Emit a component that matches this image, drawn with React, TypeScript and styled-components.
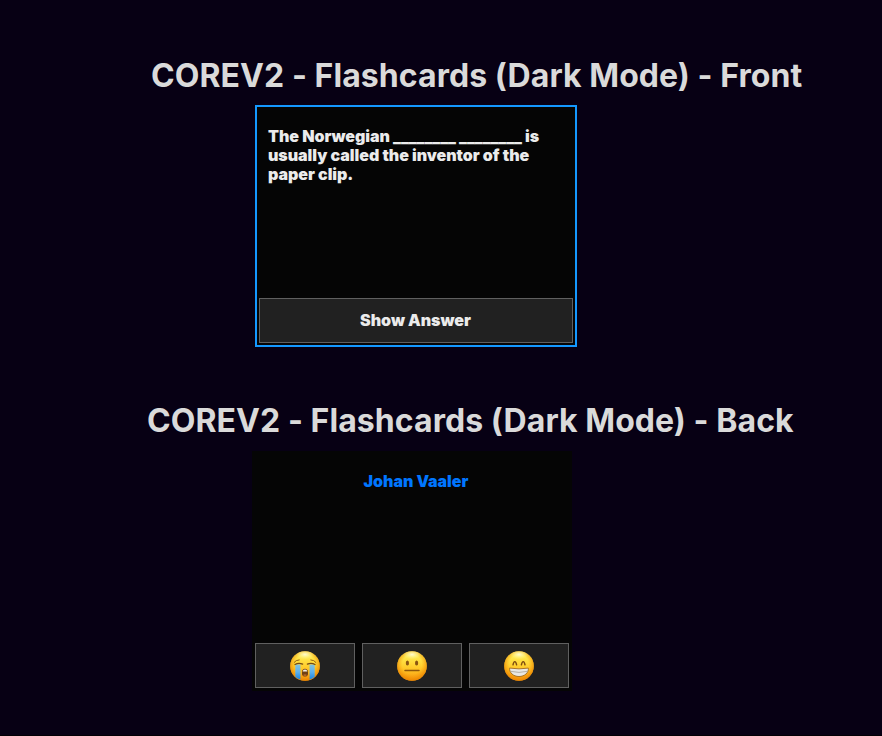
import React from "react";
import styled, { createGlobalStyle } from "styled-components";

const GlobalStyle = createGlobalStyle`
  * { box-sizing: border-box; }
  body { margin: 0; background: #070014; font-family: Inter, sans-serif; }
`;

const Page = styled.main`
  width: 882px;
  height: 736px;
  padding-top: 56px;
  background: #070014;
  border-bottom: 1px solid #020005;
  overflow: hidden;
`;

const Section = styled.section`
  height: 345px;
`;

const Title = styled.h1<{ $left: number }>`
  margin: 0 0 0 ${(p) => p.$left}px;
  height: 39px;
  font-size: 32px;
  line-height: 39px;
  font-weight: 700;
  letter-spacing: 0.07px;
  color: #dadada;
  white-space: nowrap;
`;

const Card = styled.article<{ $focused?: boolean }>`
  display: flex;
  flex-direction: column;
  justify-content: space-between;
  width: ${(p) => (p.$focused ? 322 : 320)}px;
  height: ${(p) => (p.$focused ? 242 : 240)}px;
  margin: ${(p) => (p.$focused ? "10px 0 0 255px" : "11px 0 0 252px")};
  padding: ${(p) => (p.$focused ? "20px 2px 2px" : "21px 3px 3px")};
  border: ${(p) => (p.$focused ? "2px solid #1498ff" : "none")};
  background: #050505;
`;

const Question = styled.p`
  margin: 0 9px;
  font-size: 16px;
  line-height: 19px;
  font-weight: 900;
  letter-spacing: -0.03px;
  color: #ebebeb;
  white-space: pre;
`;

const Answer = styled.p`
  margin: 0 0 0 8px;
  font-size: 16px;
  line-height: 19px;
  font-weight: 900;
  letter-spacing: -0.03px;
  text-align: center;
  color: #0076ff;
`;

const Actions = styled.div`
  display: flex;
  gap: 7px;
`;

const Button = styled.button<{ $wide?: boolean }>`
  display: flex;
  align-items: center;
  justify-content: center;
  width: ${(p) => (p.$wide ? 314 : 100)}px;
  height: 45px;
  padding: 0 1px 0 0;
  border: 1px solid #606060;
  border-radius: 0;
  background: #212121;
  color: #ebebeb;
  font: 900 16px/19px Inter, sans-serif;
  letter-spacing: -0.03px;
`;

const FaceSvg = styled.svg`
  display: block;
  width: 30px;
  height: 30px;
  margin: 1px 0 0 1px;
`;

function Face({ id, children }: { id: string; children: React.ReactNode }) {
  return (
    <FaceSvg viewBox="0 0 30 30" fill="none" aria-hidden="true">
      <defs>
        <linearGradient id={id} x1="15" y1="0" x2="15" y2="30" gradientUnits="userSpaceOnUse">
          <stop stopColor="#fff16b" />
          <stop offset=".2" stopColor="#ffe94c" />
          <stop offset=".55" stopColor="#ffcb2b" />
          <stop offset="1" stopColor="#f9970c" />
        </linearGradient>
        <radialGradient id={`${id}-rim`} cx="15" cy="13.5" r="16" gradientUnits="userSpaceOnUse">
          <stop offset=".6" stopColor="#f59a09" stopOpacity="0" />
          <stop offset="1" stopColor="#e98300" stopOpacity=".85" />
        </radialGradient>
        <radialGradient id={`${id}-shine`} cx="15" cy="3.5" r="9" gradientUnits="userSpaceOnUse" gradientTransform="matrix(1 0 0 .55 0 1.6)">
          <stop stopColor="#fffbd0" />
          <stop offset="1" stopColor="#fff58a" stopOpacity="0" />
        </radialGradient>
        <linearGradient id={`${id}-tear`} x1="0" y1="13" x2="0" y2="29" gradientUnits="userSpaceOnUse">
          <stop stopColor="#86c4dd" />
          <stop offset=".5" stopColor="#5cb1ed" />
          <stop offset="1" stopColor="#1680df" />
        </linearGradient>
      </defs>
      <circle cx="15" cy="15" r="14.8" fill={`url(#${id})`} />
      <circle cx="15" cy="15" r="14.8" fill={`url(#${id}-rim)`} />
      <circle cx="15" cy="15" r="14.8" fill={`url(#${id}-shine)`} />
      {children}
    </FaceSvg>
  );
}

const CryingFace = () => (
  <Face id="crying">
    <path d="M5.3 13.4h5.1v15.1q-2.9-.9-5.1-2.8ZM19.6 13.4h5.1v12.3q-2.2 1.9-5.1 2.8Z" fill="url(#crying-tear)" />
    <path d="M4.1 11.4Q5.7 9 9.2 8.9M25.9 11.4q-1.6-2.4-5.1-2.5" stroke="#936012" strokeWidth="1" strokeLinecap="round" />
    <path d="M5 13.5q3.6-2 7.6-.4M25 13.5q-3.6-2-7.6-.4" stroke="#744b13" strokeWidth="1.4" strokeLinecap="round" />
    <path d="M12 21.2c0-2.2 1.1-3.4 3-3.4s3 1.2 3 3.4v1.5c0 1.8-1.1 2.9-3 2.9s-3-1.1-3-2.9Z" fill="#704114" />
    <path d="M12.7 20.6q.2-2.1 2.3-2.1t2.3 2.1Z" fill="#f4f0e5" />
    <path d="M13 24q2-1.3 4 0-.7 1-2 1t-2-1Z" fill="#b96828" />
  </Face>
);

const NeutralFace = () => (
  <Face id="neutral">
    <ellipse cx="10.4" cy="11.9" rx="1.6" ry="2.5" fill="#8a5511" />
    <ellipse cx="19.6" cy="11.9" rx="1.6" ry="2.5" fill="#8a5511" />
    <path d="M8 19.4h14" stroke="#8f570b" strokeWidth="1.5" strokeLinecap="round" />
  </Face>
);

const GrinningFace = () => (
  <Face id="grinning">
    <path d="M9 13.8q.6-3.2 1.8-3.2t1.8 3.2M17.4 13.8q.6-3.2 1.8-3.2t1.8 3.2" stroke="#7e4d10" strokeWidth="1.45" strokeLinecap="round" strokeLinejoin="round" />
    <path d="M5.6 17.1q9.4 1.5 18.8 0c.4 4.7-3.8 8.4-9.4 8.4s-9.8-3.7-9.4-8.4Z" fill="#e9e8e3" stroke="#a36b1d" strokeWidth=".9" strokeLinejoin="round" />
    <path d="M6.4 20.3q8.6 2.2 17.2 0" stroke="#a6a195" strokeWidth=".8" />
  </Face>
);

export default function App() {
  return (
    <>
      <GlobalStyle />
      <Page>
        <Section>
          <Title $left={151}>COREV2 - Flashcards (Dark Mode) - Front</Title>
          <Card $focused>
            <Question>{"The Norwegian ________ ________ is\nusually called the inventor of the\npaper clip."}</Question>
            <Button $wide>Show Answer</Button>
          </Card>
        </Section>
        <Section>
          <Title $left={147}>COREV2 - Flashcards (Dark Mode) - Back</Title>
          <Card>
            <Answer>Johan Vaaler</Answer>
            <Actions>
              <Button aria-label="Hard"><CryingFace /></Button>
              <Button aria-label="Okay"><NeutralFace /></Button>
              <Button aria-label="Easy"><GrinningFace /></Button>
            </Actions>
          </Card>
        </Section>
      </Page>
    </>
  );
}
